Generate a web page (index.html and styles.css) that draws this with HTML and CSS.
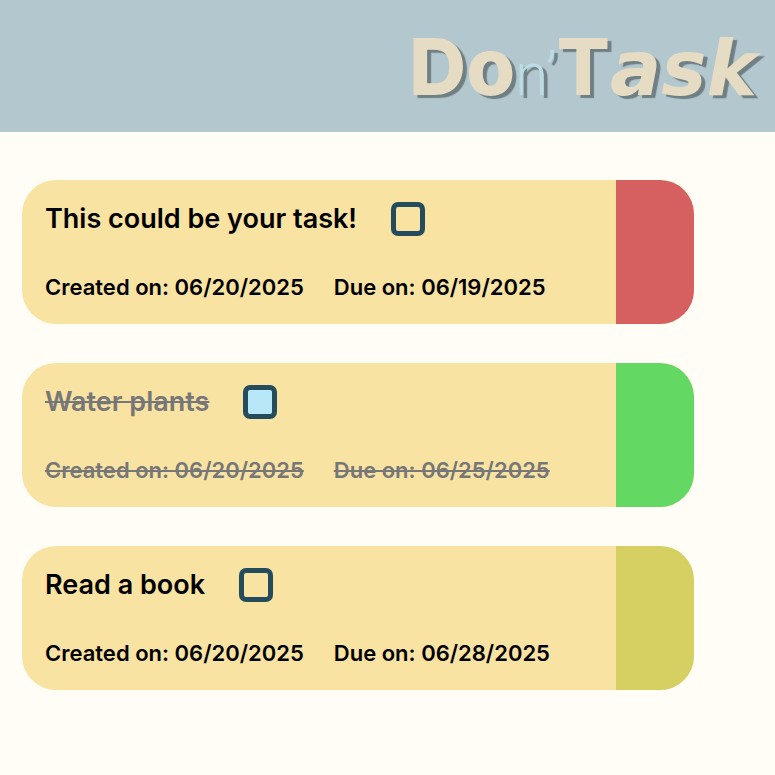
FILE: index.html
```html
<!DOCTYPE html>
<html lang="en">
<head>
<meta charset="utf-8">
<title>Don'Task</title>
<link rel="stylesheet" href="styles.css">
</head>
<body>
<header class="site-header">
  <h1 class="logo">Do<span class="logo-faint">n’</span>T<em>ask</em></h1>
</header>
<main class="task-list">
  <article class="task task-overdue">
    <div class="task-body">
      <div class="task-row">
        <label class="task-title" for="task-1">This could be your task!</label>
        <input class="task-check" type="checkbox" id="task-1">
      </div>
      <div class="task-row task-dates"><span>Created on: 06/20/2025</span><span>Due on: 06/19/2025</span></div>
    </div>
  </article>
  <article class="task task-done">
    <div class="task-body">
      <div class="task-row">
        <label class="task-title" for="task-2">Water plants</label>
        <input class="task-check" type="checkbox" id="task-2" checked>
      </div>
      <div class="task-row task-dates"><span>Created on: 06/20/2025</span><span>Due on: 06/25/2025</span></div>
    </div>
  </article>
  <article class="task task-pending">
    <div class="task-body">
      <div class="task-row">
        <label class="task-title" for="task-3">Read a book</label>
        <input class="task-check" type="checkbox" id="task-3">
      </div>
      <div class="task-row task-dates"><span>Created on: 06/20/2025</span><span>Due on: 06/28/2025</span></div>
    </div>
  </article>
</main>
</body>
</html>
```
FILE: styles.css
```css
* {
  box-sizing: border-box;
}

body {
  margin: 0;
  background: #fffdf5;
  color: #000;
  font-family: Inter, "Liberation Sans", sans-serif;
}

.site-header {
  display: flex;
  justify-content: flex-end;
  padding: 18px;
  background: #b3c7cf;
}

.logo {
  margin: 0;
  color: #e6dcc3;
  font-size: 79px;
  font-weight: 800;
  line-height: 96px;
  text-shadow: 4px 3px 1px #6f7f83;
}

.logo em {
  font-family: "DejaVu Sans", sans-serif;
  font-size: 76px;
  font-weight: 700;
  line-height: 1;
}

.logo-faint {
  color: #bbdce2;
  font-family: Roboto, sans-serif;
  font-size: 60px;
  font-weight: 300;
  line-height: 1;
}

.task-list {
  display: flex;
  flex-direction: column;
  gap: 39px;
  padding: 48px 81px 48px 22px;
}

.task {
  display: flex;
  overflow: hidden;
  border-radius: 34px;
  background: #f9e3a3;
}

.task::after {
  content: "";
  width: 78px;
  background: #d66060;
}

.task-done::after {
  background: #63d863;
}

.task-pending::after {
  background: #d6cf62;
}

.task-body {
  display: flex;
  flex: 1;
  flex-direction: column;
  gap: 36px;
  padding: 22px 23px;
}

.task-row {
  display: flex;
  align-items: center;
  gap: 34px;
  font-weight: 600;
}

.task-title {
  font-size: 27px;
  line-height: 34px;
}

.task-dates {
  gap: 30px;
  font-size: 22px;
  line-height: 30px;
}

.task-check {
  width: 34px;
  height: 34px;
  margin: 0;
  appearance: none;
  border: 5px solid #244c5c;
  border-radius: 7px;
}

.task-check:checked {
  background: #b8e8f8;
}

.task-done .task-row {
  color: #777;
}

.task-done .task-title,
.task-done .task-dates span {
  text-decoration: line-through;
}
```
